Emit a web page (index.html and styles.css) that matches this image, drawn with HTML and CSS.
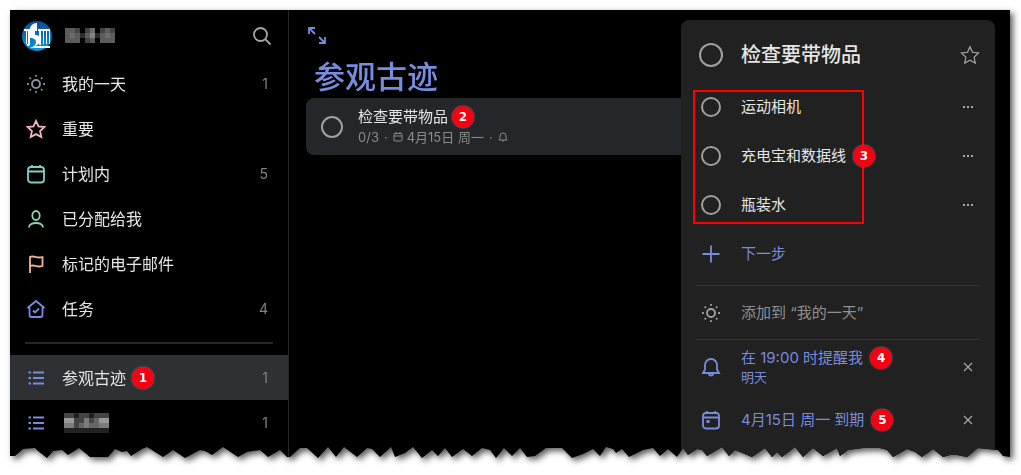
FILE: index.html
```html
<!DOCTYPE html>
<html lang="zh-CN">
<head>
<meta charset="UTF-8" />
<meta name="viewport" content="width=device-width, initial-scale=1" />
<title>参观古迹</title>
<link rel="stylesheet" href="styles.css">
</head>
<body>
  <!-- shared icons and the torn bottom edge -->
  <svg class="defs" width="0" height="0" aria-hidden="true">
    <defs>
      <clipPath id="torn" clipPathUnits="objectBoundingBox">
        <polygon transform="scale(0.001 0.002232143)" points="0,0 1000,0 1000,447 993,446 988,440 977,439 968,438 957,447 947,445 940,445 933,447 923,439 912,447 905,442 897,439 883,447 877,440 870,438 853,438 845,439 838,440 830,446 827,438 813,446 803,438 793,447 785,437 772,447 767,442 762,447 755,438 742,447 725,440 719,446 712,437 697,446 692,440 687,439 678,445 673,438 667,447 658,439 650,446 643,438 633,440 619,447 612,439 606,443 603,439 596,437 590,446 583,439 573,444 562,448 552,438 536,438 525,446 517,447 510,438 502,446 494,438 486,448 480,440 472,438 462,446 453,439 442,447 435,438 428,446 422,440 412,448 403,437 395,443 385,447 381,437 370,447 362,439 357,438 347,447 334,437 326,447 318,437 308,448 297,438 290,438 280,447 277,447 270,440 258,447 250,440 237,442 228,447 213,437 202,445 195,441 190,440 175,448 163,440 153,447 137,437 132,439 121,446 117,441 112,442 105,439 98,447 80,447 69,438 58,445 52,440 43,441 37,448 28,441 25,438 13,439 5,446 0,446" />
      </clipPath>
      <linearGradient id="sky" x1="0" y1="0" x2="0" y2="1">
        <stop offset="0" stop-color="#0c4a96" />
        <stop offset="1" stop-color="#0a9bdd" />
      </linearGradient>
      <symbol id="sun" viewBox="0 0 20 20">
        <circle cx="10" cy="10" r="4" />
        <path d="M10 1v1.8M10 17.2V19M1 10h1.8M17.2 10H19M3.700 3.700l1.200 1.200M15.100 15.100l1.200 1.200M3.700 16.300l1.200-1.200M15.100 4.900l1.200-1.200" />
      </symbol>
      <symbol id="star" viewBox="0 0 20 20">
        <path d="M10 1.8l2.5 5.5 6 .7-4.4 4.1 1.2 5.9-5.3-2.9L4.700 18l1.200-5.900L1.500 8l6-.7z" />
      </symbol>
      <symbol id="list" viewBox="0 0 20 20">
        <path d="M7 4.500h11M7 10h11M7 15.500h11M2.500 4.500h2.500M2.500 10h2.500M2.500 15.500h2.500" />
      </symbol>
      <symbol id="bell" viewBox="0 0 20 20">
        <path d="M2 16h16l-2-3.500V8a6 6 0 0 0-12 0v4.500zM8 16.500a2 2 0 0 0 4 0" />
      </symbol>
      <symbol id="close" viewBox="0 0 20 20">
        <path d="M6 6l8 8M14 6l-8 8" />
      </symbol>
      <symbol id="more" viewBox="0 0 20 20">
        <path d="M5 10h2M9 10h2M13 10h2" />
      </symbol>
    </defs>
  </svg>

  <div class="sheet">
    <div class="window">
      <aside class="sidebar">
        <header class="account">
          <svg class="avatar" viewBox="0 0 30 30" aria-hidden="true">
            <circle cx="15" cy="15" r="15" fill="url(#sky)" />
            <path fill="#fff" d="M2 8h6v15q0 2-3 2v-2H4V10H2z" />
            <path fill="#0878be" d="M5 10h1v13H5z" />
            <path fill="#fff" d="M8 8c0-3 3-6 7-6v8h-2v4c4 0 5 2 5 5s-2 5-5 6h15v2H8c4-1 6-3 6-6 0-2-2-4-6-4z" />
            <path fill="#fff" d="M16 8h12v2H16zM17 10h2v14h-2zM21 10h1v13h-1zM24 10h1v13h-1zM27 10h1v13h-1z" />
          </svg>
          <svg class="mosaic" viewBox="0 0 50 15" shape-rendering="crispEdges" aria-hidden="true">
            <path fill="#5c5c5c" d="M0 0h15v15H0zM20 0h10v15H20zM35 0h15v15H35z" />
            <path fill="#444" d="M10 0h5v5h-5zM20 0h5v5h-5zM20 10h5v5h-5zM35 0h5v5h-5zM45 0h5v5h-5z" />
            <path fill="#2c2c2c" d="M15 5h5v5h-5zM30 5h5v5h-5z" />
            <path fill="#858585" d="M25 5h5v5h-5z" />
            <path fill="#6c6c6c" d="M25 0h5v5h-5zM40 5h5v5h-5zM5 5h5v5H5z" />
          </svg>
          <button class="icon-btn" type="button" aria-label="搜索">
            <svg class="icon" viewBox="0 0 20 20"><circle cx="8.500" cy="8.500" r="6.500" /><path d="M13.200 13.200L18.500 18.500" /></svg>
          </button>
        </header>

        <nav class="lists">
          <a class="list" href="#"><svg class="icon gray"><use href="#sun" /></svg><span>我的一天</span><span class="count">1</span></a>
          <a class="list" href="#"><svg class="icon pink"><use href="#star" /></svg><span>重要</span></a>
          <a class="list" href="#"><svg class="icon teal" viewBox="0 0 20 20"><rect x="2" y="3" width="16" height="15.500" rx="3" /><path d="M2 7.500h16M6 1v2M14 1v2" /></svg><span>计划内</span><span class="count">5</span></a>
          <a class="list" href="#"><svg class="icon green" viewBox="0 0 20 20"><ellipse cx="10" cy="6.500" rx="3.700" ry="4.500" /><path d="M3 18.500c0-6 14-6 14 0" /></svg><span>已分配给我</span></a>
          <a class="list" href="#"><svg class="icon peach" viewBox="0 0 20 20"><path d="M4 19V3c4-2 7 2 12.500 0v9C11 14 8 10 4 12" /></svg><span>标记的电子邮件</span></a>
          <a class="list" href="#"><svg class="icon blue" viewBox="0 0 20 20"><path d="M1.500 9L10 2l8.500 7M3.500 8v8q0 2 2 2h9q2 0 2-2V8M7 11.500l2 2 4-4" /></svg><span>任务</span><span class="count">4</span></a>
        </nav>

        <hr class="divider">

        <nav class="lists">
          <a class="list active" href="#"><svg class="icon blue"><use href="#list" /></svg><span>参观古迹</span><span class="badge">1</span><span class="count">1</span></a>
          <a class="list" href="#" aria-label="清单"><svg class="icon blue"><use href="#list" /></svg>
            <svg class="mosaic" viewBox="0 0 50 20" shape-rendering="crispEdges" aria-hidden="true">
              <path fill="#444" d="M2 0h45v5H2z" />
              <path fill="#666" d="M2 5h45v10H2z" />
              <path fill="#222" d="M12 0h5v5h-5zM27 0h5v5h-5zM2 15h45v5H2z" />
              <path fill="#444" d="M12 5h10v5H12zM27 5h5v5h-5zM12 10h5v5h-5z" />
              <path fill="#999" d="M2 5h10v5H2zM37 5h10v5H37z" />
              <path fill="#7c7c7c" d="M2 10h10v5H2zM22 5h5v10h-5zM37 10h10v5H37z" />
            </svg>
            <span class="count">1</span></a>
        </nav>
      </aside>

      <main class="main">
        <button class="icon-btn expand" type="button" aria-label="展开">
          <svg class="icon blue" viewBox="0 0 20 20"><path d="M3 9V3h6M3 3l6 6M19 12v6h-6M19 18l-6-6" /></svg>
        </button>
        <h1>参观古迹</h1>
        <div class="task">
          <input class="check medium" type="checkbox" id="task">
          <div class="task-text">
            <div class="task-name"><label for="task">检查要带物品</label><span class="badge">2</span></div>
            <div class="task-info">
              <span>0/3</span><span>·</span>
              <span class="due"><svg class="icon tiny" viewBox="0 0 10 10"><rect x="1" y="1.500" width="8" height="7.500" rx="1" /><path d="M1 4h8M3 0v1M7 0v1" /></svg>4月15日 周一</span>
              <span>·</span><svg class="icon tiny bold"><use href="#bell" /></svg>
            </div>
          </div>
        </div>
      </main>

      <section class="detail">
        <header class="row head">
          <input class="check large" type="checkbox" id="detail-task">
          <label for="detail-task"><h2>检查要带物品</h2></label>
          <button class="icon-btn" type="button" aria-label="标记为重要"><svg class="icon thin"><use href="#star" /></svg></button>
        </header>

        <div class="steps">
          <div class="row step">
            <input class="check" type="checkbox" id="step1"><label for="step1">运动相机</label>
            <button class="icon-btn" type="button" aria-label="更多"><svg class="icon"><use href="#more" /></svg></button>
          </div>
          <div class="row step">
            <input class="check" type="checkbox" id="step2"><label for="step2">充电宝和数据线</label>
            <button class="icon-btn" type="button" aria-label="更多"><svg class="icon"><use href="#more" /></svg></button>
          </div>
          <div class="row step">
            <input class="check" type="checkbox" id="step3"><label for="step3">瓶装水</label>
            <button class="icon-btn" type="button" aria-label="更多"><svg class="icon"><use href="#more" /></svg></button>
          </div>
          <div class="frame"><span class="badge">3</span></div>
        </div>
        <button class="row step add" type="button">
          <svg class="icon blue" viewBox="0 0 20 20"><path d="M10 1.500v17M1.500 10h17" /></svg><span>下一步</span>
        </button>

        <button class="row option my-day" type="button">
          <svg class="icon"><use href="#sun" /></svg><span>添加到 “我的一天”</span>
        </button>
        <div class="row option set">
          <svg class="icon blue"><use href="#bell" /></svg>
          <div class="remind">
            <div class="remind-time">在 19:00 时提醒我<span class="badge">4</span></div>
            <div class="remind-day">明天</div>
          </div>
          <button class="icon-btn" type="button" aria-label="删除提醒"><svg class="icon thin"><use href="#close" /></svg></button>
        </div>
        <div class="row set">
          <svg class="icon blue" viewBox="0 0 20 20"><rect x="2" y="3" width="16" height="15.500" rx="3" /><path d="M2 7.500h16M6 1v2M14 1v2M5.500 11h3M5.500 12h3" /></svg>
          <span>4月15日 周一 到期</span><span class="badge">5</span>
          <button class="icon-btn" type="button" aria-label="删除截止日期"><svg class="icon thin"><use href="#close" /></svg></button>
        </div>
      </section>
    </div>
  </div>
</body>
</html>
```
FILE: styles.css
```css
* {
  box-sizing: border-box;
}
body {
  margin: 0;
  background: #fff;
  color: #e6e6e6;
  font-family: Inter, "Noto Sans CJK SC", sans-serif;
  font-size: 15px;
  line-height: 20px;
}
.defs {
  position: absolute;
}
.sheet {
  padding: 10px 11px 17px 10px;
  filter: drop-shadow(3px 3px 3px rgba(0, 0, 0, 0.65));
}
.window {
  display: flex;
  background: #000;
  clip-path: url(#torn);
}
button {
  border: none;
  padding: 0;
  background: none;
  color: inherit;
  font: inherit;
  text-align: left;
  cursor: pointer;
}

/* icons */
.icon {
  display: block;
  flex: none;
  width: 20px;
  height: 20px;
  fill: none;
  stroke: #a6a6a6;
  stroke-width: 1.8;
}
.icon.gray { stroke: #8796a5; }
.icon.pink { stroke: #f4b4c0; }
.icon.teal { stroke: #7fd0c8; }
.icon.green { stroke: #8fd3ac; }
.icon.peach { stroke: #efb597; }
.icon.blue { stroke: #788cde; }
.icon.thin { stroke-width: 1.2; }
.icon.tiny {
  width: 10px;
  height: 10px;
  stroke: #8a8a8a;
  stroke-width: 1;
}
.icon.bold { stroke-width: 2; }
.icon-btn {
  flex: none;
  margin-left: auto;
}
.badge {
  display: inline-flex;
  flex: none;
  justify-content: center;
  align-items: center;
  width: 22px;
  height: 22px;
  border-radius: 50%;
  background: #f50012;
  color: #fff;
  font: bold 12px/22px "DejaVu Sans", sans-serif;
  box-shadow: 0 0 2px rgba(255, 255, 255, 0.4);
}

/* sidebar */
.sidebar {
  flex: none;
  width: 279px;
  padding-bottom: 13px;
  border-right: 1px solid #262626;
}
.account {
  display: flex;
  align-items: center;
  height: 51px;
  padding: 0 16px 0 12px;
}
.avatar {
  width: 30px;
  height: 30px;
  margin-right: 13px;
}
.mosaic {
  width: 50px;
}
.list {
  display: flex;
  align-items: center;
  height: 45px;
  padding: 0 20px 0 16px;
  color: inherit;
  font-size: 16px;
  text-decoration: none;
}
.list .icon {
  margin-right: 16px;
}
.list .badge {
  margin-left: 6px;
}
.list.active {
  background: #2f3034;
}
.count {
  margin-left: auto;
  color: #808080;
  font-size: 14px;
}
.divider {
  height: 2px;
  margin: 11px 15px;
  border: none;
  background: #262626;
}

/* task list */
.main {
  flex: 1;
  min-width: 0;
  padding: 15px 0 0 17px;
}
.expand {
  display: block;
  margin: 0;
}
h1 {
  margin: 12px 8px 1px;
  color: #788cde;
  font-size: 31px;
  font-weight: 500;
  line-height: 40px;
}
.task {
  display: flex;
  align-items: center;
  gap: 15px;
  height: 57px;
  padding-left: 15px;
  border-radius: 8px 0 0 8px;
  background: #25262a;
}
.task-name {
  display: flex;
  align-items: center;
  gap: 4px;
  height: 20px;
}
.task-info {
  display: flex;
  align-items: center;
  gap: 5px;
  color: #8a8a8a;
  font-size: 13px;
}
.due {
  display: flex;
  align-items: center;
  gap: 4px;
}
.check {
  appearance: none;
  flex: none;
  width: 20px;
  height: 20px;
  margin: 0 5px;
  border: 2px solid #a0a0a0;
  border-radius: 50%;
}
.check.medium {
  width: 22px;
  height: 22px;
  margin: 0;
}
.check.large {
  width: 24px;
  height: 24px;
  margin: 0 3px;
}
.check:checked {
  background: #788cde;
}

/* detail panel */
.detail {
  flex: none;
  width: 314px;
  margin: 10px 15px 0 0;
  padding: 8px 15px 0;
  border-radius: 8px 8px 0 0;
  background: #212121;
}
.row {
  display: flex;
  align-items: center;
  width: 100%;
  height: 53px;
}
.row > .icon {
  margin: 0 20px 0 5px;
}
.row > .check + label {
  margin-left: 15px;
}
.row .icon-btn {
  margin-right: 2px;
}
.head {
  height: 54px;
}
.head .icon-btn {
  margin-right: 0;
}
h2 {
  margin: 0;
  font-size: 20px;
  font-weight: 500;
  line-height: 28px;
}
.steps {
  position: relative;
}
.step {
  height: 49px;
}
/* highlight around the steps */
.frame {
  position: absolute;
  top: 8px;
  left: -3px;
  width: 171px;
  height: 134px;
  border: 2px solid #f00;
  pointer-events: none;
}
.frame .badge {
  position: absolute;
  top: 53px;
  right: -13px;
}
.add {
  margin-bottom: 7px;
  color: #788cde;
}
.option {
  height: 54px;
  border-top: 1px solid #333;
}
.my-day {
  color: #8f8f8f;
}
.set {
  color: #788cde;
}
.remind-time {
  display: flex;
  align-items: center;
  gap: 7px;
  height: 20px;
}
.remind-day {
  font-size: 13px;
  line-height: 18px;
}
.set > .badge {
  margin-left: 7px;
}
```
